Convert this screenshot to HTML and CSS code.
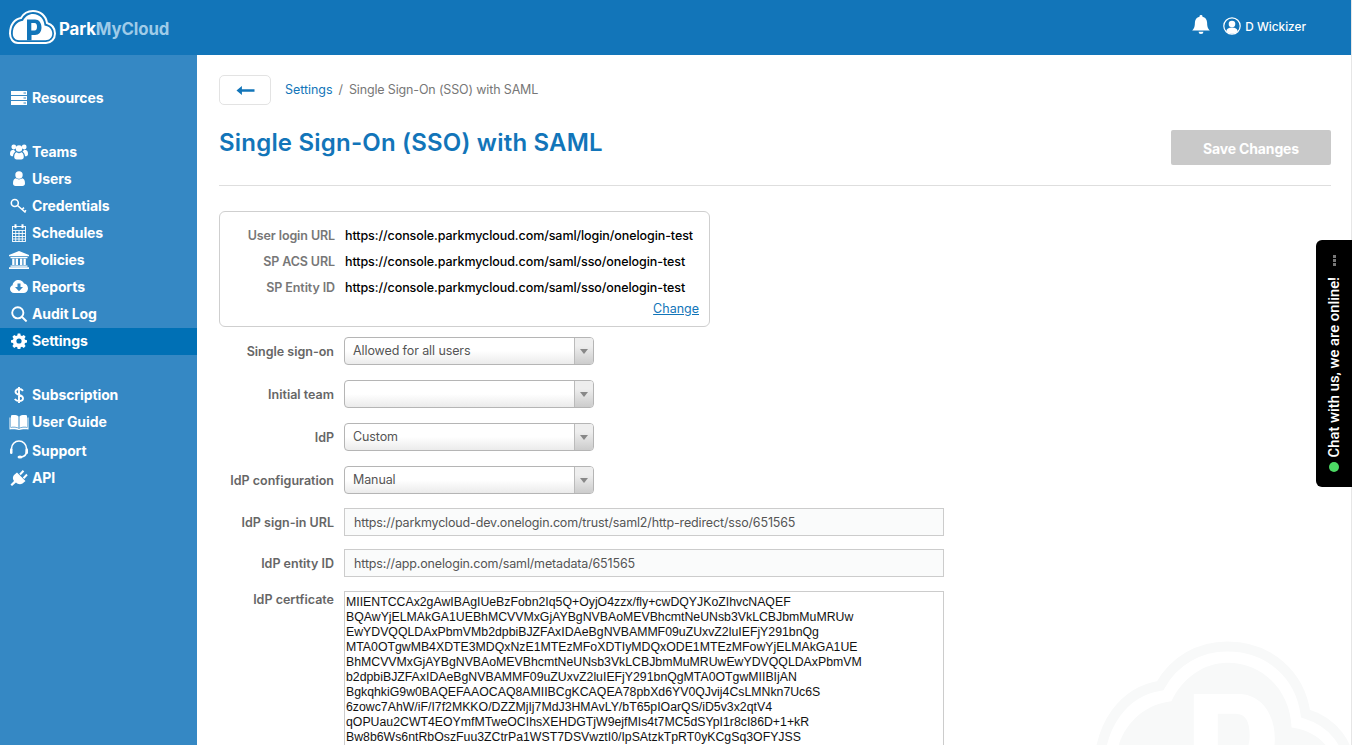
FILE: index.html
```html
<!DOCTYPE html>
<html lang="en">
<head>
<meta charset="utf-8">
<title>ParkMyCloud - Single Sign-On (SSO) with SAML</title>
<link rel="stylesheet" href="styles.css">
</head>
<body>
<svg class="defs" width="0" height="0" aria-hidden="true">
  <symbol id="cloud" viewBox="0 0 47 34">
    <path class="cloud-ring" d="M9 33C4 33 1 28.500 1 23.500C1 15 5.500 9 12 8C14.500 3.500 19 1 24 1C31.500 1 37 6 38 13C43 14.500 46 18.500 46 23.500C46 29 42 33 37 33Z"/>
    <path class="cloud-core" d="M10 30.200C6.500 30.200 3.800 27.500 3.800 23.500C3.800 16.500 8 11.500 14 10.800C16 6.500 20 3.900 24 3.900C30.500 3.900 35.300 9 35.500 15.500C40.500 16.200 43.300 19.500 43.300 23.500C43.300 27.500 40.500 30.200 36.500 30.200Z"/>
    <path class="cloud-p" fill-rule="evenodd" d="M18 9.500H26C30 9.500 32.500 13 32.500 17.500C32.500 22 30 25 26 25H22.500V30.200H18ZM22.300 13V20.500H25.500C27.300 20.500 28 19 28 16.800C28 14.500 27.300 13 25.500 13Z"/>
  </symbol>
</svg>

<header class="topbar">
  <a class="brand" href="#">
    <svg class="brand-mark"><use href="#cloud"/></svg>
    <span class="brand-name">Park<span class="brand-accent">MyCloud</span></span>
  </a>
  <div class="account">
    <svg class="bell" viewBox="1 0 16 18"><path d="M9 0a1.300 1.300 0 0 1 1.300 1.500C13 2 14.500 4.200 14.500 7c0 4 1 5.500 2.500 7H1c1.500-1.500 2.500-3 2.500-7 0-2.800 1.500-5 4.200-5.500A1.300 1.300 0 0 1 9 0ZM6.800 15h4.400a2.200 2.200 0 0 1-4.400 0Z"/></svg>
    <svg class="avatar" viewBox="0 0 18 18"><circle class="avatar-ring" cx="9" cy="9" r="8.200"/><circle cx="9" cy="7" r="3.300"/><path d="M3.300 14.200C3.800 11.800 5.500 10.600 9 10.600s5.200 1.200 5.700 3.600A8 8 0 0 1 9 16.800a8 8 0 0 1-5.700-2.600Z"/></svg>
    <span class="account-name">D Wickizer</span>
  </div>
</header>

<div class="shell">
  <nav class="sidebar">
    <ul class="nav-group">
      <li class="nav-item"><svg class="nav-icon" viewBox="0 0 18 16"><path d="M1 1h16v4H1ZM1 6h16v4H1ZM1 11h16v4H1Z"/><path class="cut" d="M13.500 3h2.500M13.500 8h2.500M13.500 13h2.500"/></svg><span>Resources</span></li>
    </ul>
    <ul class="nav-group">
      <li class="nav-item"><svg class="nav-icon" viewBox="0 0 18 16"><circle cx="3.800" cy="3" r="2.400"/><circle cx="14.200" cy="3" r="2.400"/><circle cx="9" cy="4.500" r="3.200"/><path d="M0 10c0-3 1-4.200 4-4.200.5 1 1 1.500 1.500 2C3.800 8.600 3 10.500 3 12.300 1 12.300 0 11.500 0 10ZM18 10c0-3-1-4.200-4-4.200-.5 1-1 1.500-1.500 2 1.700.8 2.500 2.700 2.500 4.500 2 0 3-.8 3-2.300ZM4.200 12.800C4.200 9.500 6 8.300 6.800 8.300c.5.500 1.300.9 2.200.9s1.700-.4 2.200-.9c.8 0 2.600 1.200 2.600 4.500 0 1.700-1 2.700-2.500 2.700H6.700c-1.500 0-2.500-1-2.500-2.700Z"/></svg><span>Teams</span></li>
      <li class="nav-item"><svg class="nav-icon" viewBox="0 0 18 16"><circle cx="9" cy="4" r="3.700"/><path d="M3 12.300C3 9 4.500 7.500 5.800 7.300 6.700 8 7.800 8.500 9 8.500s2.300-.5 3.200-1.200C13.500 7.500 15 9 15 12.300c0 1.700-1 2.700-2.600 2.700H5.600C4 15 3 14 3 12.300Z"/></svg><span>Users</span></li>
      <li class="nav-item"><svg class="nav-icon stroked" viewBox="0 0 18 16"><circle cx="4.800" cy="5" r="3.500"/><path d="M7.500 7.500l8 7M12 11.500l2-1.800M14.500 13.700l1.500-1.500"/></svg><span>Credentials</span></li>
      <li class="nav-item"><svg class="nav-icon tall stroked thin" viewBox="0 0 18 18"><rect x="2.500" y="2.500" width="13" height="15"/><path d="M2.500 6.500h13M2.500 9.500h13M2.500 12.500h13M2.500 15h13M5.700 6.500v11M9 6.500v11M12.300 6.500v11"/><path class="thick" d="M5.500 .3v4M12.500 .3v4"/></svg><span>Schedules</span></li>
      <li class="nav-item"><svg class="nav-icon bank" viewBox="0 0 20 18"><path d="M10 0l10 4v1.300H0V4ZM1.500 6h17v1.200h-17ZM3.200 7.800h2.300V14H3.200ZM6.700 7.800h2.300V14H6.700ZM11 7.800h2.300V14H11ZM14.500 7.800h2.300V14h-2.300ZM1.500 14.500h17v1.300h-17ZM0 16.300h20V18H0Z"/></svg><span>Policies</span></li>
      <li class="nav-item"><svg class="nav-icon" viewBox="0 0 18 16"><path fill-rule="evenodd" d="M4 14C1.800 14 0 12.300 0 10c0-1.800 1-3.200 2.600-3.800C3 3 5.500 1 8.500 1c2.500 0 4.500 1.300 5.500 3.500 2.300.2 4 2.400 4 5s-2 4.500-4.500 4.500ZM7.500 4.500V8H5l4 4.200L13 8h-2.500V4.500Z"/></svg><span>Reports</span></li>
      <li class="nav-item"><svg class="nav-icon stroked wide" viewBox="0 0 18 16"><circle cx="7.800" cy="6.800" r="5.600"/><path d="M11.800 10.800l4.800 4.700"/></svg><span>Audit Log</span></li>
      <li class="nav-item is-active"><svg class="nav-icon" viewBox="0 0 18 16"><path fill-rule="evenodd" d="M7.700 1h2.600l.4 2 1.300.6 1.800-1.100 1.800 1.800-1.100 1.800.5 1.300 2 .4v2.400l-2 .4-.5 1.300 1.100 1.800-1.800 1.800-1.800-1.100-1.300.5-.4 2H7.700l-.4-2-1.300-.5-1.800 1.100-1.800-1.800 1.100-1.800-.5-1.300-2-.4V7.800l2-.4.5-1.300-1.100-1.800 1.800-1.800L6 3.600l1.300-.6ZM9 6a2.600 2.600 0 1 0 0 5.200A2.600 2.600 0 0 0 9 6Z" transform="translate(0 -.6)"/></svg><span>Settings</span></li>
    </ul>
    <ul class="nav-group">
      <li class="nav-item"><svg class="nav-icon stroked wide" viewBox="0 0 18 16"><path d="M13 3.800C12 2.500 10.800 2 9 2 7 2 5.500 3 5.500 4.700c0 3.800 7.500 2.500 7.500 6.500C13 13 11.300 14 9 14c-2 0-3.300-.7-4.200-2M9 0v16"/></svg><span>Subscription</span></li>
      <li class="nav-item"><svg class="nav-icon book" viewBox="0 0 20 16"><path d="M2 1.500c2.500-.8 6-.6 7.500 1V14c-1.500-1.200-5-1.500-7.500-1ZM18 1.500c-2.500-.8-6-.6-7.500 1V14c1.500-1.200 5-1.500 7.500-1ZM.5 3.500h1v10.300c3-.6 6.500-.3 8.500.9 2-1.200 5.500-1.500 8.500-.9V3.500h1v12c-3-.6-7-.4-9.500.5-2.500-.9-6.500-1.100-9.500-.5Z"/></svg><span>User Guide</span></li>
      <li class="nav-item nav-item-support"><svg class="nav-icon stroked headset" viewBox="0 0 20 20"><path d="M2.500 10V8.500a7.500 7.500 0 0 1 15 0V11c0 3-2 5.500-5 6"/><rect class="solid" x="1" y="8.500" width="2.500" height="5.500" rx="1.200"/><rect class="solid" x="16.500" y="8.500" width="2.500" height="5.500" rx="1.200"/><ellipse class="solid" cx="11" cy="17" rx="2.500" ry="1.500"/></svg><span>Support</span></li>
      <li class="nav-item"><svg class="nav-icon" viewBox="0 0 18 16"><path d="M7 2.500L15.500 11 12.500 13.500C10 15 7.500 14 6 12.500L2 16 .5 14.500 4 11C2.500 9 2.500 7 4 5Z"/><path class="prong" d="M10 4.500L13.500.8M13.500 8.200L17 4.500"/></svg><span>API</span></li>
    </ul>
  </nav>

  <main class="content">
    <div class="crumbs">
      <button class="back" type="button" aria-label="Back"><svg class="back-arrow" viewBox="0 0 20 10"><path d="M6 0v3.500h14v3H6V10L0 5Z"/></svg></button>
      <a class="crumb-link" href="#">Settings</a>
      <span class="crumb-sep">/</span>
      <span class="crumb-current">Single Sign-On (SSO) with SAML</span>
    </div>

    <div class="title-row">
      <h1 class="title">Single Sign-On (SSO) with SAML</h1>
      <button class="save" type="button">Save Changes</button>
    </div>
    <hr class="rule">

    <section class="info-box">
      <div class="info-row"><span class="info-label">User login URL</span><span class="info-value">https://console.parkmycloud.com/saml/login/onelogin-test</span></div>
      <div class="info-row"><span class="info-label">SP ACS URL</span><span class="info-value">https://console.parkmycloud.com/saml/sso/onelogin-test</span></div>
      <div class="info-row"><span class="info-label">SP Entity ID</span><span class="info-value">https://console.parkmycloud.com/saml/sso/onelogin-test</span></div>
      <div class="info-change"><a href="#">Change</a></div>
    </section>

    <form class="form">
      <div class="row"><span class="label">Single sign-on</span><div class="select"><span class="select-text">Allowed for all users</span><span class="select-arrow"></span></div></div>
      <div class="row"><span class="label">Initial team</span><div class="select"><span class="select-text"></span><span class="select-arrow"></span></div></div>
      <div class="row"><span class="label">IdP</span><div class="select"><span class="select-text">Custom</span><span class="select-arrow"></span></div></div>
      <div class="row row-14"><span class="label">IdP configuration</span><div class="select"><span class="select-text">Manual</span><span class="select-arrow"></span></div></div>
      <div class="row row-13"><span class="label">IdP sign-in URL</span><input class="input" type="text" value="https://parkmycloud-dev.onelogin.com/trust/saml2/http-redirect/sso/651565"></div>
      <div class="row row-14"><span class="label">IdP entity ID</span><input class="input" type="text" value="https://app.onelogin.com/saml/metadata/651565"></div>
      <div class="row row-cert"><span class="label">IdP certficate</span><textarea class="cert" wrap="off" readonly>MIIENTCCAx2gAwIBAgIUeBzFobn2Iq5Q+OyjO4zzx/fly+cwDQYJKoZIhvcNAQEF
BQAwYjELMAkGA1UEBhMCVVMxGjAYBgNVBAoMEVBhcmtNeUNsb3VkLCBJbmMuMRUw
EwYDVQQLDAxPbmVMb2dpbiBJZFAxIDAeBgNVBAMMF09uZUxvZ2luIEFjY291bnQg
MTA0OTgwMB4XDTE3MDQxNzE1MTEzMFoXDTIyMDQxODE1MTEzMFowYjELMAkGA1UE
BhMCVVMxGjAYBgNVBAoMEVBhcmtNeUNsb3VkLCBJbmMuMRUwEwYDVQQLDAxPbmVM
b2dpbiBJZFAxIDAeBgNVBAMMF09uZUxvZ2luIEFjY291bnQgMTA0OTgwMIIBIjAN
BgkqhkiG9w0BAQEFAAOCAQ8AMIIBCgKCAQEA78pbXd6YV0QJvij4CsLMNkn7Uc6S
6zowc7AhW/iF/I7f2MKKO/DZZMjIj7MdJ3HMAvLY/bT65pIOarQS/iD5v3x2qtV4
qOPUau2CWT4EOYmfMTweOCIhsXEHDGTjW9ejfMIs4t7MC5dSYpI1r8cI86D+1+kR
Bw8b6Ws6ntRbOszFuu3ZCtrPa1WST7DSVwztI0/IpSAtzkTpRT0yKCgSq3OFYJSS</textarea></div>
    </form>

    <svg class="watermark"><use href="#cloud"/></svg>
  </main>
</div>

<aside class="chat">
  <span class="chat-dot"></span>
  <span class="chat-text">Chat with us, we are online!</span>
  <span class="chat-grip"></span>
</aside>
</body>
</html>
```
FILE: styles.css
```css
* { box-sizing: border-box; }
html, body { height: 100%; margin: 0; }
body {
  display: flex;
  flex-direction: column;
  height: 745px;
  overflow: hidden;
  background: #fff;
  font-family: Inter, "Open Sans", sans-serif;
  color: #666;
  border-right: 1px solid #e6e6e6;
}
.defs { position: absolute; }
ul { list-style: none; margin: 0; padding: 0; }
a { text-decoration: none; }

.topbar {
  flex: 0 0 55px;
  display: flex;
  align-items: center;
  justify-content: space-between;
  background: #1275b9;
  padding: 0 45px 0 9px;
}
.brand { display: flex; align-items: center; gap: 3px; }
.brand-mark {
  width: 47px;
  height: 34px;
  margin-bottom: 1px;
  --ring: #fff;
  --core: #fff;
  --letter: #1275b9;
  --ring-width: 2;
}
.cloud-ring { fill: none; stroke: var(--ring); stroke-width: var(--ring-width); }
.cloud-core { fill: var(--core); }
.cloud-p { fill: var(--letter); }
.brand-name { font-size: 16.800px; font-weight: 700; color: #fff; letter-spacing: -.1px; padding-top: 2px; }
.brand-accent { color: #9fcbe8; }

.account { display: flex; align-items: center; color: #fff; margin-bottom: 2px; }
.bell { width: 18px; height: 20px; fill: #fff; margin-right: 13px; margin-bottom: 4px; }
.avatar { width: 18px; height: 18px; fill: #fff; margin-right: 4px; margin-bottom: 2px; }
.avatar-ring { fill: none; stroke: #fff; stroke-width: 1.200; }
.account-name { font-size: 11.800px; font-weight: 500; }

.shell { flex: 1; display: flex; min-height: 0; }

.sidebar {
  flex: 0 0 197px;
  background: #3588c4;
  padding-top: 30px;
}
.nav-group { margin-bottom: 27px; }
.nav-item {
  display: flex;
  align-items: center;
  height: 27px;
  padding-left: 10px;
  color: #fff;
  font-size: 14px;
  font-weight: 700;
  letter-spacing: -.1px;
}
.nav-item span { margin-left: 4px; padding-bottom: 2px; }
.nav-item-support { margin-top: 2px; }
.is-active { background: #0070b5; }
.nav-icon { width: 18px; height: 16px; fill: #fff; flex: none; margin-bottom: 2px; }
.nav-icon.tall { height: 18px; }
.nav-icon.bank { height: 18px; width: 20px; margin-left: -1px; margin-right: -1px; }
.nav-icon.book { width: 20px; margin-left: -1px; margin-right: -1px; }
.nav-icon.headset { width: 20px; height: 20px; margin-left: -1px; margin-right: -1px; margin-top: -2px; }
.stroked { fill: none; stroke: #fff; stroke-width: 1.600; }
.stroked.thin { stroke-width: .9; }
.stroked.wide { stroke-width: 1.900; }
.stroked .thick { stroke-width: 2; }
.stroked .solid { fill: #fff; stroke: none; }
.cut { stroke: #3588c4; stroke-width: 1; fill: none; }
.prong { fill: none; stroke: #fff; stroke-width: 2; }

.content {
  position: relative;
  flex: 1;
  min-width: 0;
  overflow: hidden;
  padding: 20px 20px 0 22px;
  font-size: 12.500px;
}
.crumbs { display: flex; align-items: center; height: 30px; letter-spacing: -.05px; }
.back {
  width: 52px;
  height: 30px;
  padding: 0;
  margin-right: 14px;
  background: #fff;
  border: 1px solid #e3e3e3;
  border-radius: 5px;
  display: flex;
  align-items: center;
  justify-content: center;
}
.back-arrow { width: 19px; height: 9px; fill: #1275b9; }
.crumb-link { color: #1275b9; padding-bottom: 2px; }
.crumb-sep { margin: 0 6px; color: #777; padding-bottom: 2px; }
.crumb-current { color: #777; padding-bottom: 2px; letter-spacing: -.15px; }

.title-row {
  display: flex;
  justify-content: space-between;
  align-items: flex-start;
  margin-top: 25px;
}
.title {
  margin: 0;
  height: 35px;
  line-height: 26px;
  font-size: 24px;
  font-weight: 600;
  letter-spacing: .2px;
  color: #1275b9;
}
.save {
  width: 160px;
  height: 35px;
  padding: 2px 0 0;
  border: 0;
  border-radius: 2px;
  background: #c9c9c9;
  color: #fff;
  font: 700 14px Inter, sans-serif;
  letter-spacing: -.15px;
}
.rule { margin: 20px 0 25px; height: 1px; border: 0; background: #dedede; }

.info-box {
  width: 491px;
  height: 116px;
  border: 1px solid #cfcfcf;
  border-radius: 6px;
  padding: 10px 10px 0 0;
}
.info-row { display: flex; align-items: center; height: 26px; }
.info-label { width: 115px; flex: none; text-align: right; font-weight: 600; color: #777; letter-spacing: -.1px; }
.info-value { margin-left: 10px; color: #000; font-weight: 500; white-space: nowrap; letter-spacing: -.08px; }
.info-change { text-align: right; line-height: 18px; }
.info-change a { color: #1275b9; text-decoration: underline; }

.form { margin-top: 10px; }
.row { display: flex; margin-bottom: 15px; align-items: center; }
.row-14 { margin-bottom: 14px; }
.row-13 { margin-bottom: 13px; }
.row-cert { align-items: flex-start; }
.label {
  width: 115px;
  margin-right: 10px;
  padding-top: 1px;
  text-align: right;
  font-weight: 600;
  color: #666;
  white-space: nowrap;
}
.row-cert .label { padding-top: 0; margin-top: 1px; }

.select {
  display: flex;
  width: 250px;
  height: 28px;
  border: 1px solid #b5b5b5;
  border-radius: 4px;
  background: linear-gradient(#fff 50%, #ebebeb);
  color: #555;
  letter-spacing: -.1px;
}
.select-text { flex: 1; padding-left: 8px; line-height: 26px; }
.select-arrow {
  position: relative;
  width: 19px;
  border-left: 1px solid #bbb;
  background: linear-gradient(#eee 30%, #ccc);
  border-radius: 0 3px 3px 0;
}
.select-arrow::after {
  content: "";
  position: absolute;
  left: 5px;
  top: 11px;
  border: 4px solid transparent;
  border-top: 5px solid #888;
  border-bottom: 0;
}
.input {
  width: 600px;
  height: 28px;
  padding: 0 9px;
  border: 1px solid #ccc;
  border-radius: 0;
  background: #fafbfb;
  color: #555;
  font: 12.500px Inter, sans-serif;
  letter-spacing: -.15px;
}
.cert {
  display: block;
  width: 600px;
  height: 300px;
  padding: 3px 1px;
  border: 1px solid #ccc;
  border-radius: 0;
  background: #fff;
  color: #111;
  font: 12.300px/15px "Liberation Sans", Arial, sans-serif;
  overflow: hidden;
  resize: none;
}

.watermark {
  position: absolute;
  z-index: -1;
  left: 896px;
  top: 586px;
  width: 263px;
  height: 190px;
  --ring: #f8f9f9;
  --core: #f8f9f9;
  --letter: #fff;
  --ring-width: 1.800;
}

.chat {
  position: fixed;
  left: 1316px;
  top: 240px;
  width: 36px;
  height: 247px;
  display: flex;
  flex-direction: column-reverse;
  align-items: center;
  padding: 15px 0 15px;
  background: #000;
  border-radius: 6px 0 0 6px;
  color: #fff;
}
.chat-dot { width: 10px; height: 10px; border-radius: 50%; background: #4cd964; margin-top: 5px; }
.chat-text {
  writing-mode: vertical-rl;
  transform: rotate(180deg);
  font: 500 14.800px Roboto, sans-serif;
  white-space: nowrap;
}
.chat-grip {
  width: 3px;
  height: 11px;
  margin-bottom: auto;
  background: repeating-linear-gradient(#777 0 3px, transparent 3px 4px);
}
```
